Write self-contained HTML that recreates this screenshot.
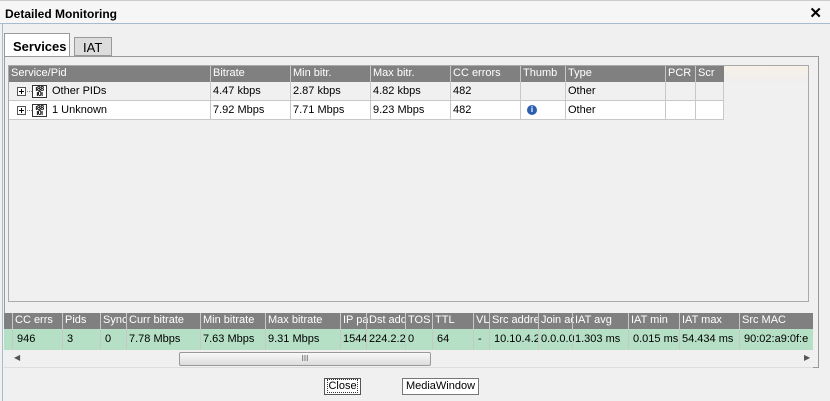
<!DOCTYPE html>
<html><head><style>
*{margin:0;padding:0;box-sizing:border-box}
body{width:830px;height:401px;background:#f0f0f0;font-family:"Liberation Sans",Arial,sans-serif;font-size:11px;position:relative;overflow:hidden}
.abs{position:absolute}
.title{left:0;top:0;width:830px;height:24px;background:#f6f6f6;border-top:1px solid #ccc;border-bottom:1px solid #a7bccf}
.title b{position:absolute;left:5px;top:6px;font-size:12px}
.x{position:absolute;right:8px;top:3px;font-size:15px;font-weight:bold}
.hdr{background:#808080;color:#fff;height:16px;line-height:15px;white-space:nowrap;overflow:hidden}
.cell{position:absolute;top:0;bottom:0;border-left:1px solid #c8c8c8;padding-left:2px;overflow:hidden;white-space:nowrap}
.row{height:19px;line-height:19px;border-bottom:1px solid #c8c8c8}
.pl{position:absolute;left:8px;top:5px;width:9px;height:9px;border:1px solid #555;background:#fff}
.pl:before{content:"";position:absolute;left:1px;top:3px;width:5px;height:1px;background:#000}
.pl:after{content:"";position:absolute;left:3px;top:1px;width:1px;height:5px;background:#000}
.dl{position:absolute;left:18px;top:9px;width:5px;border-top:1px dotted #888}
.ic{position:absolute;left:23px;top:3px;width:15px;height:13px;border:1px solid #333;background:#fff;font-size:7px;line-height:5px;text-align:center;letter-spacing:-0.5px;font-weight:bold;padding-top:1px}
.vt{position:absolute;left:12px;top:0;height:100%;border-left:1px dotted #888}
</style></head><body>
<div class="abs title"><b>Detailed Monitoring</b><span class="x">✕</span></div>
<div class="abs" style="left:2px;top:24px;width:1px;height:377px;background:#a7bccf"></div>
<div class="abs" style="left:4px;top:33px;width:66px;height:24px;background:#fff;border:1px solid #999;border-bottom:none;font-weight:bold;font-size:13px;padding:5px 0 0 8px">Services</div>
<div class="abs" style="left:74px;top:37px;width:38px;height:19px;background:#dcdcdc;border:1px solid #999;font-size:13px;padding:2px 0 0 8px">IAT</div>
<div class="abs" style="left:4px;top:56px;width:815px;height:312px;border:1px solid #999;background:#f0f0f0"></div>
<div class="abs" style="left:8px;top:65px;width:801px;height:237px;border:1px solid #aaa;background:#f0f0f0"></div>
<div class="abs" style="left:724px;top:66px;width:84px;height:16px;background:linear-gradient(#f7f0e6,#efefef)"></div>
<div class="abs" style="left:9px;top:66px;width:715px">
 <div class="hdr" style="position:relative">
  <span class="cell" style="left:0;border:none">Service/Pid</span><span class="cell" style="left:201px">Bitrate</span><span class="cell" style="left:281px">Min bitr.</span><span class="cell" style="left:361px">Max bitr.</span><span class="cell" style="left:441px">CC errors</span><span class="cell" style="left:511px">Thumb</span><span class="cell" style="left:556px">Type</span><span class="cell" style="left:656px">PCR</span><span class="cell" style="left:686px">Scr</span>
 </div>
 <div class="row" style="position:relative;background:#f0f0f0">
  <span class="cell" style="left:0;width:201px;border:none;padding-left:43px"><span class="pl"></span><span class="dl"></span><span class="ic">ı88<br>ı0ı</span>Other PIDs</span><span class="cell" style="left:201px">4.47 kbps</span><span class="cell" style="left:281px">2.87 kbps</span><span class="cell" style="left:361px">4.82 kbps</span><span class="cell" style="left:441px">482</span><span class="cell" style="left:511px"></span><span class="cell" style="left:556px">Other</span><span class="cell" style="left:656px"></span><span class="cell" style="left:686px;right:0;border-right:1px solid #c8c8c8"></span>
 </div>
 <div class="row" style="position:relative;background:#fff">
  <span class="cell" style="left:0;width:201px;border:none;padding-left:43px"><span class="pl"></span><span class="dl"></span><span class="ic">ı88<br>ı0ı</span>1 Unknown</span><span class="cell" style="left:201px">7.92 Mbps</span><span class="cell" style="left:281px">7.71 Mbps</span><span class="cell" style="left:361px">9.23 Mbps</span><span class="cell" style="left:441px">482</span><span class="cell" style="left:511px;padding-left:6px"><span style="display:inline-block;width:10px;height:10px;border-radius:50%;background:#2d5fb0;color:#fff;font-size:8px;line-height:10px;text-align:center;font-weight:bold;vertical-align:middle">i</span></span><span class="cell" style="left:556px">Other</span><span class="cell" style="left:656px"></span><span class="cell" style="left:686px;right:0;border-right:1px solid #c8c8c8"></span>
 </div>
</div>
<div class="abs" style="left:4px;top:313px;width:809px">
 <div class="hdr" style="position:relative;height:16px">
  <span class="cell" style="left:8px">CC errs</span><span class="cell" style="left:58px">Pids</span><span class="cell" style="left:96px">Sync</span><span class="cell" style="left:122px">Curr bitrate</span><span class="cell" style="left:196px">Min bitrate</span><span class="cell" style="left:261px">Max bitrate</span><span class="cell" style="left:336px;width:28px">IP pa</span><span class="cell" style="left:362px;width:40px">Dst add</span><span class="cell" style="left:401px">TOS</span><span class="cell" style="left:428px">TTL</span><span class="cell" style="left:469px;width:17px">VL</span><span class="cell" style="left:485px;width:50px">Src addre</span><span class="cell" style="left:534px;width:36px">Join ad</span><span class="cell" style="left:568px">IAT avg</span><span class="cell" style="left:624px">IAT min</span><span class="cell" style="left:675px">IAT max</span><span class="cell" style="left:735px;right:0">Src MAC</span>
 </div>
 <div style="position:relative;height:21px;line-height:20px;background:#b5e0c5">
  <span class="cell" style="left:8px;padding-left:4px">946</span><span class="cell" style="left:58px;padding-left:4px">3</span><span class="cell" style="left:96px;padding-left:4px">0</span><span class="cell" style="left:122px">7.78 Mbps</span><span class="cell" style="left:196px">7.63 Mbps</span><span class="cell" style="left:261px">9.31 Mbps</span><span class="cell" style="left:336px;width:28px">1544</span><span class="cell" style="left:362px;width:40px">224.2.2</span><span class="cell" style="left:401px">0</span><span class="cell" style="left:428px;padding-left:4px">64</span><span class="cell" style="left:469px;width:17px;padding-left:4px">-</span><span class="cell" style="left:485px;width:50px;padding-left:4px">10.10.4.2</span><span class="cell" style="left:534px;width:36px">0.0.0.0</span><span class="cell" style="left:568px">1.303 ms</span><span class="cell" style="left:624px;padding-left:4px">0.015 ms</span><span class="cell" style="left:675px">54.434 ms</span><span class="cell" style="left:735px;right:0;padding-left:4px">90:02:a9:0f:e</span>
 </div>
 <div style="position:relative;height:18px;background:#f0f0f0;border-bottom:1px solid #ddd">
  <span style="position:absolute;left:10px;top:3px;font-size:8px;color:#555">◀</span>
  <div style="position:absolute;left:175px;top:2px;width:252px;height:14px;border:1px solid #999;border-radius:2px;background:linear-gradient(#f8f8f8,#dcdcdc);text-align:center;font-size:8px;line-height:12px;color:#555">III</div>
  <span style="position:absolute;left:800px;top:3px;font-size:8px;color:#555">▶</span>
 </div>
</div>
<div class="abs" style="left:324px;top:378px;width:37px;height:17px;border:1px solid #555;background:#fff;text-align:center;line-height:15px;font-size:11px"><span style="outline:1px dotted #333">Close</span></div>
<div class="abs" style="left:402px;top:378px;width:77px;height:17px;border:1px solid #777;background:#fff;text-align:center;line-height:15px;font-size:11px">MediaWindow</div>
</body></html>
